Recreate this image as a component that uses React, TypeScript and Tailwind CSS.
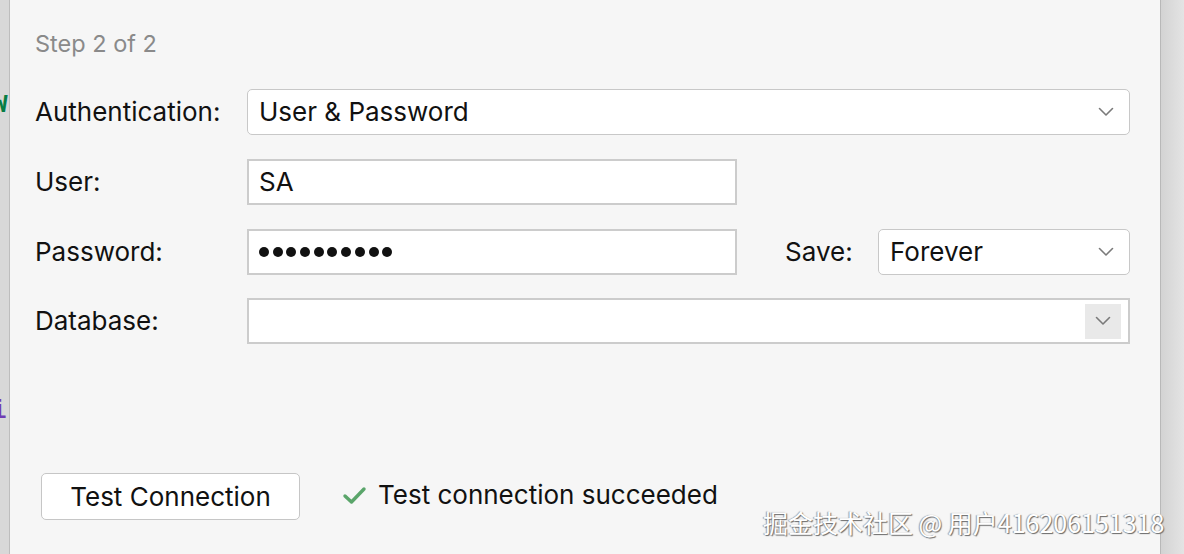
const Chevron = () => (
  <svg width="16" height="10" viewBox="0 0 16 10" fill="none">
    <path d="M1.5 1.5 L8 8 L14.5 1.5" stroke="#7a7a7a" strokeWidth="1.6" strokeLinecap="round" strokeLinejoin="round" />
  </svg>
);

const Label = ({ children }: { children: React.ReactNode }) => (
  <div className="w-[212px] shrink-0 text-[#111]">{children}</div>
);

export default function App() {
  return (
    <div
      className="relative flex h-[554px] w-[1184px] overflow-hidden bg-[#f6f6f6] text-[26px] leading-[32px]"
      style={{ fontFamily: "Inter, 'Noto Sans', sans-serif" }}
    >
      {/* editor behind the dialog */}
      <div className="relative w-[9px] shrink-0 overflow-hidden bg-[#d8d8d8] font-['Liberation_Mono',monospace] text-[26px] font-bold leading-[30px]">
        <div className="absolute left-[-8px] top-[90px] text-[#067d45]">W</div>
        <div className="absolute left-[-9px] top-[396px] text-[#6f3cb4]">i</div>
      </div>
      <div className="w-px shrink-0 bg-[#bdbdbd]" />

      {/* dialog */}
      <div className="flex flex-1 flex-col pl-[25px] pr-[30px] pt-[29px]">
        <div className="text-[23.5px] leading-[30px] text-[#8a8a8a]">Step 2 of 2</div>

        <div className="mt-[30px] flex flex-col gap-[24px]">
          <div className="flex items-center">
            <Label>Authentication:</Label>
            <div className="flex h-[46px] flex-1 items-center justify-between rounded-[5px] border border-[#c8c8c8] bg-white pl-[11px] pr-[15px]">
              <span className="text-[#111]">User &amp; Password</span>
              <Chevron />
            </div>
          </div>

          <div className="flex items-center">
            <Label>User:</Label>
            <div className="flex h-[46px] w-[490px] items-center border-2 border-[#cccccc] bg-white pl-[10px] text-[#111]">
              SA
            </div>
          </div>

          <div className="flex items-center">
            <Label>Password:</Label>
            <div className="flex h-[46px] w-[490px] items-center gap-[3.7px] border-2 border-[#cccccc] bg-white pl-[10px]">
              {Array.from({ length: 10 }).map((_, i) => (
                <span key={i} className="block h-[10px] w-[10px] rounded-full bg-[#111]" />
              ))}
            </div>
            <div className="ml-[48px] w-[93px] text-[#111]">Save:</div>
            <div className="flex h-[46px] flex-1 items-center justify-between rounded-[5px] border border-[#c8c8c8] bg-white pl-[11px] pr-[15px]">
              <span className="text-[#111]">Forever</span>
              <Chevron />
            </div>
          </div>

          <div className="-mt-px flex items-center">
            <Label>Database:</Label>
            <div className="flex h-[46px] flex-1 items-center justify-end border-2 border-[#cccccc] bg-white pr-[7px]">
              <div className="flex h-[35px] w-[36px] items-center justify-center bg-[#e9e9e9]">
                <Chevron />
              </div>
            </div>
          </div>
        </div>

        <div className="mt-[129px] flex items-center">
          <button className="ml-[6px] h-[47px] w-[259px] rounded-[5px] border border-[#c6c6c6] bg-white text-[26px] text-[#111]">
            Test Connection
          </button>
          <div className="ml-[42px] flex items-center gap-[11px] -mt-[3px]">
            <svg width="25" height="19" viewBox="0 0 25 19" fill="none">
              <path d="M3 10 L9.5 16 L22 3" stroke="#5aa56a" strokeWidth="3.4" strokeLinecap="round" strokeLinejoin="round" />
            </svg>
            <span className="text-[#111]">Test connection succeeded</span>
          </div>
        </div>
      </div>

      <div className="w-px shrink-0 bg-[#b8b8b8]" />
      <div className="w-[23px] shrink-0 bg-gradient-to-r from-[#d3d3d3] to-[#e4e4e4]" />

      {/* watermark */}
      <div
        className="absolute left-[763px] top-[506px] text-[25px] leading-[32px] text-white"
        style={{
          fontFamily: "'Noto Sans CJK SC', sans-serif",
          textShadow: "1px 1px 1px #6a6a6a, -1px 0 1px #9a9a9a",
        }}
      >
        掘金技术社区 @ 用户416206151318
      </div>
    </div>
  );
}
